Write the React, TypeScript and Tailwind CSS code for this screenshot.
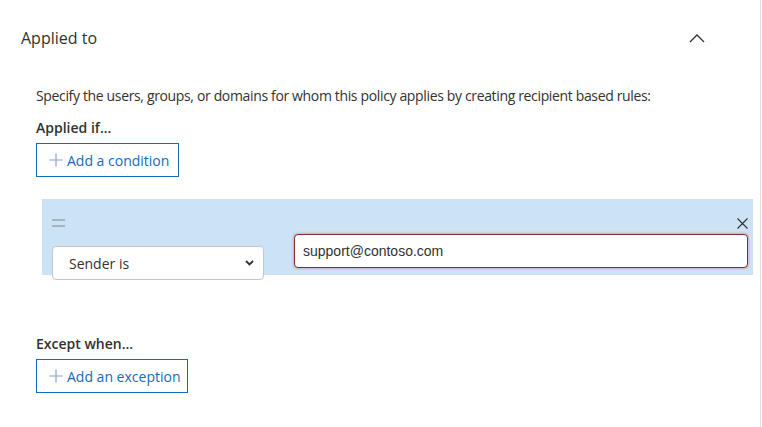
import React from 'react';

const PlusIcon: React.FC = () => (
  <svg width="14" height="14" viewBox="0 0 14 14" className="shrink-0">
    <path d="M7 0.5v13M0.5 7h13" stroke="#8aa4c8" strokeWidth="1.2" fill="none" />
  </svg>
);

const AddButton: React.FC<{ label: string; width: string }> = ({ label, width }) => (
  <button
    className={`${width} h-[34px] border border-[#0f6cbd] bg-white flex items-center gap-[4px] pl-[12px] text-[14px] text-[#0f6cbd]`}
  >
    <PlusIcon />
    <span>{label}</span>
  </button>
);

const App: React.FC = () => {
  return (
    <div className="w-[762px] h-[427px] bg-white overflow-hidden font-['Open_Sans',sans-serif] text-[#323130]">
      <div className="w-[761px] h-full border-r border-[#e1dfdd]">
        {/* header */}
        <div className="flex items-center justify-between pl-[21px] pr-[55px] pt-[27px]">
          <span className="text-[16px] leading-[22px]">Applied to</span>
          <svg width="16" height="10" viewBox="0 0 16 10">
            <path d="M1 9l7-7 7 7" stroke="#323130" strokeWidth="1.3" fill="none" />
          </svg>
        </div>

        <div className="pl-[36px]">
          <p className="mt-[37px] text-[14px] leading-[20px] tracking-[-0.35px]">
            Specify the users, groups, or domains for whom this policy applies by creating recipient based rules:
          </p>
          <h3 className="mt-[12px] text-[14px] leading-[20px] font-semibold">Applied if...</h3>
          <div className="mt-[5px]">
            <AddButton label="Add a condition" width="w-[143px]" />
          </div>
        </div>

        {/* condition row */}
        <div className="ml-[42px] mt-[22px] w-[711px] h-[76px] bg-[#cce3f5] pl-[10px] pr-[5px] pt-[19px]">
          <div className="flex items-center justify-between h-[10px]">
            <svg width="13" height="8" viewBox="0 0 13 8">
              <path d="M0 1h13M0 7h13" stroke="#7a8591" strokeWidth="1.2" />
            </svg>
            <svg width="11" height="11" viewBox="0 0 11 11">
              <path d="M0.5 0.5l10 10M10.5 0.5l-10 10" stroke="#323130" strokeWidth="1.1" />
            </svg>
          </div>
          <div className="flex items-start gap-[30px] mt-[6px]">
            <div className="mt-[12px] w-[212px] h-[34px] bg-white border border-[#c8c6c4] rounded-[4px] flex items-center justify-between pl-[16px] pr-[9px] text-[14px] text-[#323130]">
              <span>Sender is</span>
              <svg width="9" height="6" viewBox="0 0 9 6">
                <path d="M1 1l3.5 3.5L8 1" stroke="#323130" strokeWidth="1.8" fill="none" />
              </svg>
            </div>
            <div className="w-[454px] h-[34px] bg-white border border-[#8e2a2a] rounded-[4px] shadow-[0_0_3px_rgba(164,38,44,0.5)] flex items-center pl-[8px] font-['Liberation_Sans',Arial,sans-serif] text-[14px] text-[#323130]">
              support@contoso.com
            </div>
          </div>
        </div>

        <div className="pl-[36px]">
          <h3 className="mt-[59px] text-[14px] leading-[20px] font-semibold">Except when...</h3>
          <div className="mt-[5px]">
            <AddButton label="Add an exception" width="w-[152px]" />
          </div>
        </div>
      </div>
    </div>
  );
};

export default App;
